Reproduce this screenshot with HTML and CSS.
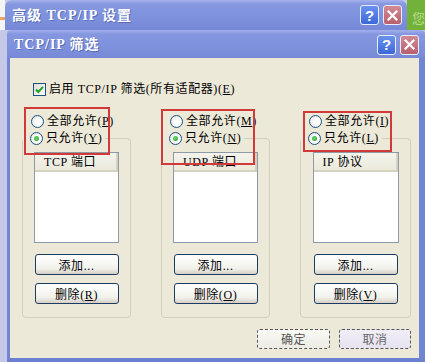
FILE: index.html
```html
<!DOCTYPE html>
<html>
<head>
<meta charset="utf-8">
<link rel="stylesheet" href="styles.css">
</head>
<body>
<div class="screen">
  <div class="top">
    <div class="corner"></div>
    <div class="outer-title">
      <span class="title-text">高级 TCP/IP 设置</span>
      <span class="tbtns">
        <span class="tb help">?</span>
        <span class="tb close"><svg width="11" height="11" viewBox="0 0 11 11"><path d="M1.5 1.5L9.5 9.5M9.5 1.5L1.5 9.5" stroke="#fff" stroke-width="2.2" stroke-linecap="square"/></svg></span>
      </span>
    </div>
    <div class="green"><span>您</span></div>
  </div>
  <div class="lower">
    <div class="side"></div>
    <div class="dialog">
      <div class="inner-title">
        <span class="title-text">TCP/IP 筛选</span>
        <span class="tbtns">
          <span class="tb help">?</span>
          <span class="tb close"><svg width="11" height="11" viewBox="0 0 11 11"><path d="M1.5 1.5L9.5 9.5M9.5 1.5L1.5 9.5" stroke="#fff" stroke-width="2.2" stroke-linecap="square"/></svg></span>
        </span>
      </div>
      <div class="frame">
        <div class="body">
          <div class="check-row">
            <span class="checkbox"><svg width="11" height="11" viewBox="0 0 11 11"><path d="M2 5.5L4.3 8L9 2.8" stroke="#21a121" stroke-width="2" fill="none"/></svg></span>
            <span class="lbl">启用 TCP/IP 筛选(所有适配器)(<u>E</u>)</span>
          </div>
          <div class="groups">
            <div class="col">
              <div class="radio-row"><span class="radio"></span><span class="lbl">全部允许(<u>P</u>)</span></div>
              <div class="group">
                <div class="radio-row cap"><span class="radio on"></span><span class="lbl">只允许(<u>Y</u>)</span></div>
                <div class="list"><div class="lh">TCP 端口</div></div>
                <button class="btn first">添加...</button>
                <button class="btn">删除(<u>R</u>)</button>
              </div>
            </div>
            <div class="col">
              <div class="radio-row"><span class="radio"></span><span class="lbl">全部允许(<u>M</u>)</span></div>
              <div class="group">
                <div class="radio-row cap"><span class="radio on"></span><span class="lbl">只允许(<u>N</u>)</span></div>
                <div class="list"><div class="lh">UDP 端口</div></div>
                <button class="btn first">添加...</button>
                <button class="btn">删除(<u>O</u>)</button>
              </div>
            </div>
            <div class="col wide">
              <div class="radio-row"><span class="radio"></span><span class="lbl">全部允许(<u>I</u>)</span></div>
              <div class="group">
                <div class="radio-row cap"><span class="radio on"></span><span class="lbl">只允许(<u>L</u>)</span></div>
                <div class="list wide"><div class="lh">IP 协议</div></div>
                <button class="btn first">添加...</button>
                <button class="btn">删除(<u>V</u>)</button>
              </div>
            </div>
          </div>
          <div class="footer">
            <button class="btn dash ok">确定</button>
            <button class="btn dash cancel">取消</button>
          </div>
        </div>
      </div>
    </div>
  </div>
  <div class="mark m1"></div>
  <div class="mark m2"></div>
  <div class="mark m3"></div>
</div>
</body>
</html>
```
FILE: styles.css
```css
* { box-sizing: border-box; }
body { margin: 0; background: #fff; }
.screen {
  width: 425px; height: 362px; overflow: hidden; position: relative;
  font-family: "Liberation Serif", "Noto Sans CJK SC", serif;
  font-size: 12px; color: #000;
  background: #c6c9e7;
}
.top { display: flex; height: 30px; }
.corner {
  width: 5px;
  background: linear-gradient(#f4f4f4 0, #f4f4f4 17px, #f0a060 17px, #f0a060 20px, #f4f4f4 20px);
}
.outer-title {
  width: 402px; height: 30px;
  display: flex; align-items: center; justify-content: space-between;
  padding: 0 5px 0 7px;
  border-radius: 7px 7px 0 0;
  background: linear-gradient(#a5b2ec 0, #8597e0 4px, #7e91dc 60%, #7587d6 100%);
}
.green {
  flex: 1; background: #73b23a; position: relative; overflow: hidden;
}
.green span {
  position: absolute; left: 5px; top: 8px; color: #b9dc8e; font-size: 13px;
  font-family: "Noto Sans CJK SC", sans-serif;
}
.title-text {
  color: #fff; font-weight: bold; font-size: 14px; line-height: 17px;
  text-shadow: 1px 1px 0 #5a6cb8; letter-spacing: 1px;
}
.tbtns { display: flex; gap: 4px; }
.tb {
  width: 19px; height: 20px; border-radius: 3px; border: 1px solid #e8ecff;
  display: flex; align-items: center; justify-content: center;
  color: #fff; font: bold 15px "Liberation Sans", sans-serif;
}
.help { background: linear-gradient(#6a92ee, #3c68d8); }
.close { background: linear-gradient(#d28a94, #b8606e); }
.lower { display: flex; height: 332px; }
.side { width: 7px; background: #c5c8e6; }
.dialog { width: 418px; display: flex; flex-direction: column; }
.inner-title {
  height: 28px; display: flex; align-items: center; justify-content: space-between;
  padding: 1px 6px 0 7px;
  border-radius: 4px 4px 0 0;
  background: linear-gradient(#a4b1eb 0, #8597e0 4px, #7e91dc 60%, #7789d8 100%);
}
.frame {
  height: 304px;
  border-left: 3px solid #7284d4;
  border-right: 6px solid #7284d4;
  border-bottom: 4px solid #6d7fd0;
}
.body { height: 300px; background: #ece9d8; padding: 0 0 0 12px; }
.check-row { display: flex; align-items: center; height: 14px; padding: 24px 0 0 11px; box-sizing: content-box; }
.checkbox {
  width: 13px; height: 13px; border: 1px solid #1c5180; background: linear-gradient(135deg, #dcdcd7, #fff);
  display: flex; align-items: center; justify-content: center; margin-right: 3px;
}
.lbl { line-height: 15px; white-space: nowrap; letter-spacing: 0.6px; }
.groups { display: flex; gap: 30px; margin-top: 17px; }
.col { width: 109px; display: flex; flex-direction: column; }
.col.wide { width: 111px; }
.radio-row { display: flex; align-items: center; height: 17px; padding-left: 9px; }
.radio {
  width: 13px; height: 13px; border-radius: 50%; border: 1px solid #1c5180;
  background: radial-gradient(circle at 60% 60%, #fff 30%, #dcdcd7 100%);
  margin-right: 3px; position: relative; flex: none;
}
.radio.on::after {
  content: ""; position: absolute; left: 3px; top: 3px; width: 5px; height: 5px; border-radius: 50%;
  background: radial-gradient(circle at 40% 40%, #6fd66f, #21a121);
}
.group {
  margin-top: 8px; border: 1px solid #d0d0bf; border-radius: 4px;
  display: flex; flex-direction: column; align-items: center;
  padding-bottom: 12px; height: 180px;
}
.radio-row.cap {
  margin-top: -9px; align-self: flex-start; padding-left: 7px; padding-right: 3px;
  background: #ece9d8;
}
.list {
  margin-top: 5px; width: 85px; height: 91px; background: #fff;
  border: 1px solid #8d9aa6;
}
.list.wide { width: 86px; }
.lh {
  height: 19px; line-height: 18px; padding-left: 9px; white-space: nowrap; letter-spacing: 0.6px;
  background: linear-gradient(#f4f3ec, #ebeadb);
  border-bottom: 2px solid #d6d2c2; border-right: 2px solid #d6d2c2;
}
.btn {
  width: 84px; height: 21px; margin-top: 8px; padding: 0;
  font: 12px "Liberation Serif", "Noto Sans CJK SC", serif; color: #000; letter-spacing: 0.6px;
  border: 1px solid #1d3c64; border-radius: 3px;
  background: linear-gradient(#ffffff, #f2f2ec 70%, #d6d0c5);
}
.btn.first { margin-top: 11px; }
.footer { display: flex; justify-content: flex-end; gap: 9px; padding-right: 8px; margin-top: 11px; }
.btn.dash {
  margin-top: 0; height: 20px; border: 1px dashed #555; color: #555;
  background: linear-gradient(#fafaf6, #ecebe4);
}
.btn.ok { width: 73px; }
.btn.cancel { width: 72px; background: linear-gradient(#f1eef8, #e6e2ee); color: #666; }
.mark { position: absolute; border: 2px solid #d23a3a; }
.m1 { left: 24px; top: 107px; width: 86px; height: 48px; }
.m2 { left: 161px; top: 109px; width: 94px; height: 56px; }
.m3 { left: 303px; top: 111px; width: 89px; height: 41px; }
```
